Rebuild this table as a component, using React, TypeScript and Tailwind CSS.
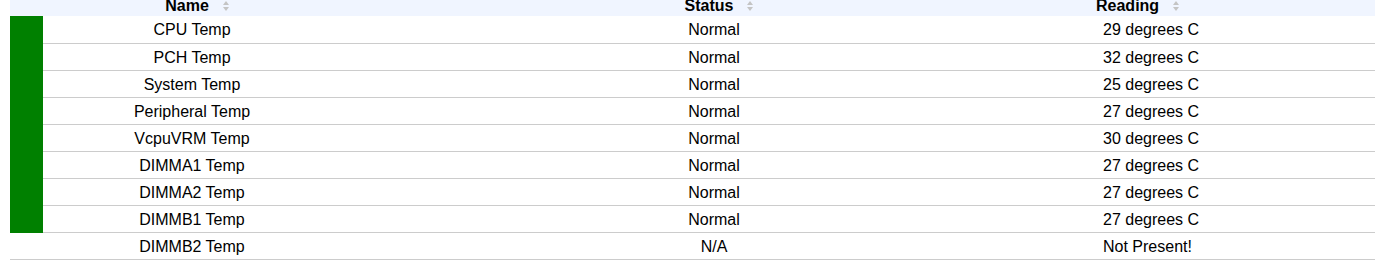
import React from "react";

type Sensor = {
  name: string;
  status: string;
  reading: string;
  ok: boolean;
};

const SENSORS: Sensor[] = [
  { name: "CPU Temp", status: "Normal", reading: "29 degrees C", ok: true },
  { name: "PCH Temp", status: "Normal", reading: "32 degrees C", ok: true },
  { name: "System Temp", status: "Normal", reading: "25 degrees C", ok: true },
  { name: "Peripheral Temp", status: "Normal", reading: "27 degrees C", ok: true },
  { name: "VcpuVRM Temp", status: "Normal", reading: "30 degrees C", ok: true },
  { name: "DIMMA1 Temp", status: "Normal", reading: "27 degrees C", ok: true },
  { name: "DIMMA2 Temp", status: "Normal", reading: "27 degrees C", ok: true },
  { name: "DIMMB1 Temp", status: "Normal", reading: "27 degrees C", ok: true },
  { name: "DIMMB2 Temp", status: "N/A", reading: "Not Present!", ok: false },
];

function SortIcon() {
  return (
    <svg width="6" height="12" viewBox="0 0 6 12" className="ml-[14px] inline-block shrink-0" aria-hidden>
      <path d="M3 1 L6 5 L0 5 Z" fill="#c4c4c4" />
      <path d="M0 7 L6 7 L3 11 Z" fill="#c4c4c4" />
    </svg>
  );
}

function HeaderCell({ label, align }: { label: string; align: "center" | "left" }) {
  return (
    <th className="h-4 p-0 align-top font-bold">
      <div
        className={
          align === "center"
            ? "flex h-4 items-start justify-center pl-[10px] leading-[12px]"
            : "flex h-4 items-start justify-start pl-[9px] leading-[12px]"
        }
      >
        <span>{label}</span>
        <SortIcon />
      </div>
    </th>
  );
}

export default function App() {
  return (
    <div
      className="min-h-[276px] bg-white pl-[10px] text-[16px] text-black"
      style={{ fontFamily: '"Liberation Sans", Arial, sans-serif' }}
    >
      <table className="w-[1365px] table-fixed border-collapse">
        <colgroup>
          <col className="w-[33px]" />
          <col className="w-[298px]" />
          <col className="w-[746px]" />
          <col />
        </colgroup>
        <thead>
          <tr className="bg-[#f0f5ff]">
            <th className="h-4 p-0" />
            <HeaderCell label="Name" align="center" />
            <HeaderCell label="Status" align="center" />
            <HeaderCell label="Reading" align="left" />
          </tr>
        </thead>
        <tbody>
          {SENSORS.map((s) => (
            <tr key={s.name} className="h-[27px]">
              <td
                className={
                  s.ok
                    ? "border-b border-[#008000] bg-[#008000] p-0"
                    : "border-b border-[#cccccc] p-0"
                }
              />
              <td className="border-b border-[#cccccc] p-0 pt-[1px] text-center leading-[25px]">{s.name}</td>
              <td className="border-b border-[#cccccc] p-0 pt-[1px] text-center leading-[25px]">{s.status}</td>
              <td className="border-b border-[#cccccc] p-0 pt-[1px] pl-[16px] text-left leading-[25px]">{s.reading}</td>
            </tr>
          ))}
        </tbody>
      </table>
    </div>
  );
}
